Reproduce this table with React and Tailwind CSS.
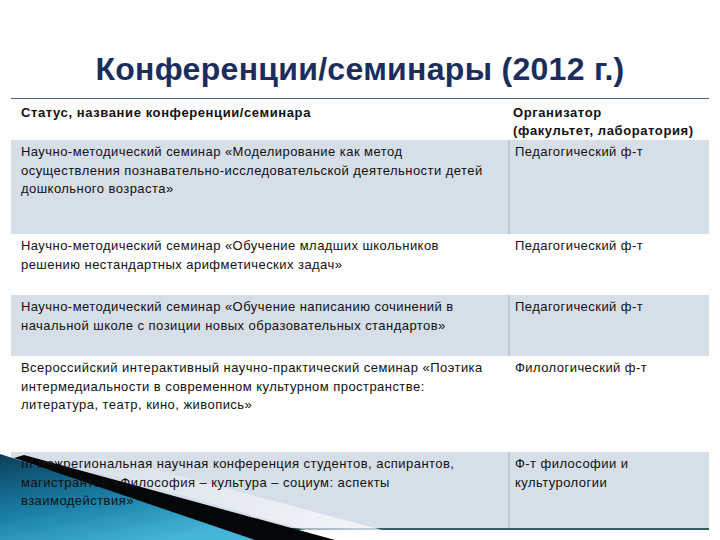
import React from 'react';

const rows = [
  {
    title: ['Научно-методический семинар «Моделирование как метод', 'осуществления познавательно-исследовательской деятельности детей', 'дошкольного возраста»'],
    org: ['Педагогический ф-т'],
    h: 'h-[94px]',
    shaded: true,
  },
  {
    title: ['Научно-методический семинар «Обучение младших школьников', 'решению нестандартных арифметических задач»'],
    org: ['Педагогический ф-т'],
    h: 'h-[61px]',
    shaded: false,
  },
  {
    title: ['Научно-методический семинар «Обучение написанию сочинений в', 'начальной школе с позиции новых образовательных стандартов»'],
    org: ['Педагогический ф-т'],
    h: 'h-[61px]',
    shaded: true,
  },
  {
    title: ['Всероссийский интерактивный научно-практический семинар «Поэтика', 'интермедиальности в современном культурном пространстве:', 'литература, театр, кино, живопись»'],
    org: ['Филологический ф-т'],
    h: 'h-[96px]',
    shaded: false,
  },
  {
    title: ['III межрегиональная научная конференция студентов, аспирантов,', 'магистрантов «Философия – культура – социум: аспекты', 'взаимодействия»'],
    org: ['Ф-т философии и', 'культурологии'],
    h: 'h-[76px]',
    shaded: true,
  },
];

const Lines = ({ lines }) => lines.map((l, i) => <div key={i} className="whitespace-nowrap">{l}</div>);

// theme swoosh in the lower left corner of the slide
const Decoration = () => (
  <svg className="absolute left-0 bottom-0 pointer-events-none" width="720" height="100" viewBox="0 0 720 100">
    <defs>
      <linearGradient id="blue" x1="0" y1="0" x2="0.6" y2="1">
        <stop offset="0" stopColor="#0b3f5c" />
        <stop offset="0.55" stopColor="#1a7fa6" />
        <stop offset="1" stopColor="#45b5d8" />
      </linearGradient>
      <linearGradient id="glow" x1="0" y1="0" x2="1" y2="0">
        <stop offset="0" stopColor="#ffffff" stopOpacity="0" />
        <stop offset="1" stopColor="#ffffff" stopOpacity="0.8" />
      </linearGradient>
    </defs>
    <polygon points="40,15 340,100 420,100 120,20" fill="url(#glow)" />
    <polygon points="0,14 270,100 0,100" fill="url(#blue)" />
    <polygon points="24,15 335,100 255,100 14,18" fill="#050608" />
  </svg>
);

export default function App() {
  return (
    <div className="relative w-[720px] h-[540px] bg-white overflow-hidden" style={{ fontFamily: '"Liberation Sans", Arial, sans-serif' }}>
      <div className="h-[98px] flex items-center justify-center pt-[40px]">
        <h1 className="text-[32px] leading-none font-bold text-[#1b2d5c] tracking-[0.3px]">Конференции/семинары (2012 г.)</h1>
      </div>
      <Decoration />
      <div className="mx-[11px] border-t-[1.5px] border-t-[#4d6b80] border-b-[2px] border-b-[#2f5d6b] text-[13px] leading-[18.5px] text-[#111] tracking-[0.45px]">
        <div className="flex h-[41px] font-bold tracking-[0.6px]">
          <div className="w-[497px] pl-[10px] pt-[5px]">Статус, название конференции/семинара</div>
          <div className="flex-1 pl-[5px] pt-[5px] leading-[18px]">
            <div>Организатор</div>
            <div className="whitespace-nowrap">(факультет, лаборатория)</div>
          </div>
        </div>
        {rows.map((r, i) => (
          <div key={i} className={`flex ${r.h} ${r.shaded ? 'bg-[#d6dee8]' : 'bg-white'}`}>
            <div className="relative z-10 w-[497px] pl-[10px] pt-[3px]">
              <Lines lines={r.title} />
            </div>
            <div className={`relative z-10 flex-1 pl-[5px] pt-[3px] border-l-2 ${r.shaded ? 'border-l-[#bfc8d3]' : 'border-l-white'}`}>
              <Lines lines={r.org} />
            </div>
          </div>
        ))}
      </div>
    </div>
  );
}
